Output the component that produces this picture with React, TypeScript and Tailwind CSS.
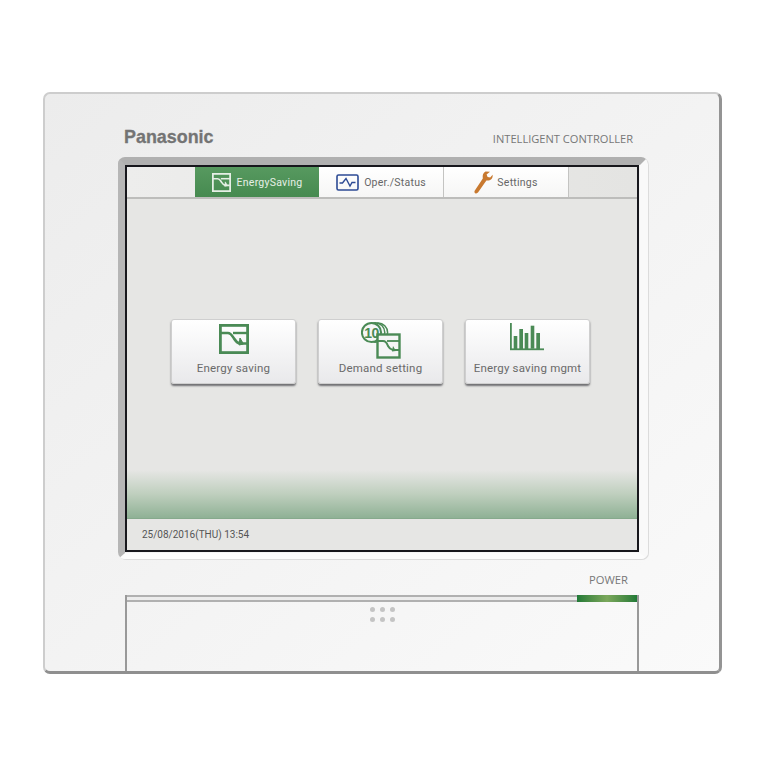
import React from 'react';

function SavingIcon({ size, stroke }: { size: number; stroke: string }) {
  return (
    <svg width={size} height={size} viewBox="0 0 30 30" fill="none" stroke={stroke} className="shrink-0">
      <rect x="1.4" y="1.4" width="27.2" height="27.2" strokeWidth="2.8" />
      <path d="M1.5 9 H9 C12 9 13 11.5 15 14.5 C16.5 17 18 19 21 19.5 L28 19.5" strokeWidth="2.6" />
      <path d="M14 9 H28.5" strokeWidth="2.4" />
      <path d="M21 14 L24.5 20 L20 21 Z" fill={stroke} strokeWidth="1" />
    </svg>
  );
}

function DemandIcon() {
  return (
    <svg width="40" height="38" viewBox="0 0 40 38" fill="none" className="shrink-0">
      <circle cx="17" cy="11.5" r="9.6" stroke="#4a8a55" strokeWidth="1.5" />
      <circle cx="14" cy="11.5" r="9.8" stroke="#4a8a55" strokeWidth="1.5" fill="#f6f6f7" />
      <circle cx="10.5" cy="11.5" r="9.6" stroke="#4a8a55" strokeWidth="2" fill="#f6f6f7" />
      <rect x="16.5" y="13.5" width="22" height="23" fill="#f4f5f5" stroke="#4a8a55" strokeWidth="2.4" />
      <path d="M16.5 20 H22 C25 20 26 22 27 25 C28 27 30 28.5 32 29 L38 29" stroke="#4a8a55" strokeWidth="2" />
      <path d="M26 20 H38" stroke="#4a8a55" strokeWidth="1.8" />
      <path d="M32 25 L35 30 L31 30.5 Z" fill="#4a8a55" />
      <text x="10.5" y="16.5" textAnchor="middle" fontSize="14" fontWeight="700" fill="#4a8a55" fontFamily="'Liberation Sans', sans-serif" letterSpacing="-0.6">10</text>
    </svg>
  );
}

function BarsIcon() {
  return (
    <svg width="35" height="28" viewBox="0 0 35 28" className="shrink-0" fill="#4a8a55">
      <rect x="0" y="0" width="1.8" height="27" />
      <rect x="0" y="25.4" width="34" height="1.8" />
      <rect x="3.7" y="13" width="3.6" height="13" />
      <rect x="9.3" y="6" width="3.7" height="20" />
      <rect x="14.7" y="10" width="3.6" height="16" />
      <rect x="20.7" y="2.7" width="3.6" height="23" />
      <rect x="26.3" y="10" width="3.7" height="16" />
    </svg>
  );
}

function PulseIcon() {
  return (
    <svg width="23" height="17" viewBox="0 0 23 17" fill="none" stroke="#2c4a94" className="shrink-0">
      <rect x="1" y="1" width="21" height="15" rx="1.5" strokeWidth="1.6" />
      <path d="M3.5 9 H6.5 L10 4.5 L14 12 L16 8.5 H19.5" strokeWidth="1.4" />
    </svg>
  );
}

function WrenchIcon() {
  return (
    <svg width="19" height="23" viewBox="0 0 19 23" className="shrink-0">
      <path
        d="M11.5 0.5 L16 0.8 L12.6 3.6 L13.6 6 L16.2 6.4 L18.6 3.8 C19 6.6 17.6 9.2 14.6 9.6 L12.4 9.4 L4 21.6 C3 22.8 1 22.6 0.6 21.4 C0.3 20.6 0.5 20 1 19.2 L8.8 7.4 C8.4 4 9 1.8 11.5 0.5 Z"
        fill="#c8792f"
      />
    </svg>
  );
}

function NavTab({ active, icon, label, gap, border }: { active?: boolean; icon: React.ReactNode; label: string; gap: string; border?: boolean }) {
  return (
    <div
      className={`h-full pt-[1px] flex items-center justify-center ${gap} ${
        active ? 'w-[124px] bg-gradient-to-b from-[#57995f] to-[#468a50] text-[#e6efe6]' : 'bg-gradient-to-b from-white to-[#f6f6f5] text-[#666]'
      } ${border ? 'w-[125px] border-r border-[#c4c4c2]' : ''}`}
    >
      {icon}
      <span className="text-[10.5px] tracking-[0.25px]">{label}</span>
    </div>
  );
}

function MenuButton({ icon, label, iconBox }: { icon: React.ReactNode; label: string; iconBox: string }) {
  return (
    <div className="w-[125px] h-[65px] rounded-[3px] bg-gradient-to-b from-white to-[#e9e9eb] border border-[#cfcfcf] shadow-[0_2px_2px_#6f6f72] flex flex-col items-center">
      <div className={`${iconBox} flex items-end justify-center`}>{icon}</div>
      <span className="text-[11.5px] text-[#6a6a6a] tracking-[0.2px] mt-auto mb-[8px] leading-[14px]">{label}</span>
    </div>
  );
}

export default function App() {
  return (
    <div className="w-[765px] h-[765px] bg-white pt-[92px] pl-[43px] overflow-hidden font-['Roboto','Liberation_Sans',sans-serif]">
      {/* 本体 */}
      <div className="w-[679px] h-[582px] rounded-[7px] border-t-2 border-l-2 border-r-[3px] border-b-[3px] border-t-[#cdcdcd] border-l-[#cdcdcd] border-r-[#949494] border-b-[#8f8f8f] bg-gradient-to-br from-[#ececec] via-[#f3f3f3] to-[#fafafa] flex flex-col">
        <div className="h-[63px] flex items-start justify-between pl-[79px] pr-[86px]">
          <span className="mt-[33px] text-[17.9px] leading-[20px] font-bold text-[#747474] [-webkit-text-stroke:0.3px_#747474] font-['Liberation_Sans',sans-serif]">Panasonic</span>
          <span className="mt-[37px] text-[11.1px] leading-[16px] text-[#777] font-['Open_Sans',sans-serif]">INTELLIGENT CONTROLLER</span>
        </div>

        {/* 画面 */}
        <div className="ml-[73px] w-[530px] h-[402px] rounded-[7px] border-t-[8px] border-l-[7px] border-r-[8px] border-b-[6px] border-t-[#b0b0b0] border-l-[#b6b6b6] border-r-[#f9f9f9] border-b-[#fcfcfc] shadow-[1px_1px_0_#dcdcdc]">
          <div className="w-[514px] h-[387px] border-2 border-[#17171c] flex flex-col bg-[#e6e6e4]">
            <div className="h-[32px] shrink-0 flex border-b-2 border-[#bdbdbb] bg-gradient-to-r from-[#ededec] to-[#e4e4e2]">
              <div className="w-[68px]" />
              <NavTab active gap="gap-[6px]" icon={<SavingIcon size={19} stroke="#e6efe6" />} label="EnergySaving" />
              <NavTab gap="gap-[5px]" border icon={<PulseIcon />} label="Oper./Status" />
              <NavTab gap="gap-[4px]" border icon={<WrenchIcon />} label="Settings" />
            </div>

            <div className="flex-1 flex flex-col">
              <div className="h-[120px]" />
              <div className="flex gap-[22px] pl-[44px]">
                <MenuButton iconBox="h-[34px]" icon={<SavingIcon size={30} stroke="#4a8a55" />} label="Energy saving" />
                <MenuButton iconBox="h-[39px]" icon={<DemandIcon />} label="Demand setting" />
                <MenuButton iconBox="h-[31px]" icon={<BarsIcon />} label="Energy saving mgmt" />
              </div>
              <div className="flex-1" />
              <div className="h-[49px] shrink-0 border-b border-[#86a98c] bg-gradient-to-b from-[#e6e6e4] via-[#bfcfbe] to-[#8fb195]" />
            </div>

            <div className="h-[31px] shrink-0 flex items-center pl-[15px] text-[10px] text-[#555] bg-[#e6e6e4]">
              25/08/2016(THU) 13:54
            </div>
          </div>
        </div>

        <div className="h-[36px] shrink-0 flex justify-end items-end pr-[91px] pb-[8px]">
          <span className="text-[11.2px] leading-[14px] text-[#777] font-['Open_Sans',sans-serif]">POWER</span>
        </div>

        {/* 下部カバー */}
        <div className="ml-[80px] w-[514px] flex-1 border-l-2 border-r-2 border-[#999] flex flex-col">
          <div className="h-[7px] shrink-0 flex border-t-2 border-b-2 border-[#b0b0b0] bg-[#ececec]">
            <div className="flex-1" />
            <div className="w-[60px] -my-[2px] bg-gradient-to-r from-[#1f7a37] via-[#7ba85c] to-[#1f7a37]" />
          </div>
          <div className="mt-[5px] ml-[243px] grid grid-cols-[5px_5px_5px] gap-[5px]">
            {[0, 1, 2, 3, 4, 5].map(i => (
              <div key={i} className="w-[5px] h-[5px] rounded-full bg-[#c4c4c4]" />
            ))}
          </div>
        </div>
      </div>
    </div>
  );
}
